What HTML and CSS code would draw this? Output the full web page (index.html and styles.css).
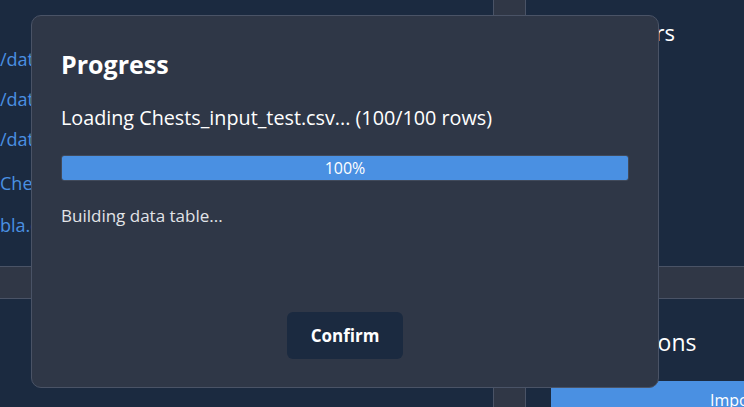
FILE: index.html
```html
<!DOCTYPE html>
<html>
<head>
<meta charset="utf-8">
<link rel="stylesheet" href="styles.css">
</head>
<body>
<div class="app">
  <section class="pane pane-files">
    <ul class="file-list">
      <li>/data/Chests_input_test.csv</li>
      <li>/data/Chests_output.csv</li>
      <li>/data/tabla_test.csv</li>
      <li>Chests_input_test.csv</li>
      <li>bla.csv</li>
    </ul>
  </section>
  <div class="vsplit"></div>
  <section class="pane pane-params">
    <h2 class="pane-title">Parameters</h2>
  </section>
  <div class="hsplit"></div>
  <section class="pane pane-bottom-left"></section>
  <div class="vsplit"></div>
  <section class="pane pane-actions">
    <h2 class="pane-title actions-title">Actions</h2>
    <button class="import-btn">Import</button>
  </section>
</div>

<div class="dialog">
  <h1 class="dialog-title">Progress</h1>
  <p class="dialog-status">Loading Chests_input_test.csv... (100/100 rows)</p>
  <div class="progress"><div class="progress-fill" style="width:100%"></div><span class="progress-label">100%</span></div>
  <p class="dialog-sub">Building data table...</p>
  <div class="dialog-footer"><button class="confirm-btn">Confirm</button></div>
</div>
</body>
</html>
```
FILE: styles.css
```css
* { box-sizing: border-box; }
html, body { margin: 0; padding: 0; }
body {
  width: 744px; height: 407px; overflow: hidden;
  background: #1b2a40;
  font-family: "Open Sans", "Noto Sans", sans-serif;
  color: #ffffff;
  position: relative;
}
.app {
  display: grid;
  grid-template-columns: 493px 33px 1fr;
  grid-template-rows: 266px 33px 1fr;
  height: 407px;
}
.pane { background: #1b2a40; overflow: hidden; min-width: 0; }
.vsplit {
  background: #303746;
  border-left: 1px solid #4a5366;
  border-right: 1px solid #4a5366;
}
.hsplit {
  grid-column: 1 / -1;
  background: #303746;
  border-top: 1px solid #4a5366;
  border-bottom: 1px solid #4a5366;
}
.file-list {
  list-style: none; margin: 0; padding: 47px 0 0 0;
  display: flex; flex-direction: column; gap: 15px;
}
.file-list li {
  color: #4a90e2; font-size: 18px; line-height: 25px; white-space: nowrap;
}
.file-list li:nth-child(4) { margin-top: 4px; }
.file-list li:nth-child(5) { margin-top: 2px; }
.pane-title {
  margin: 0; font-weight: 400; color: #fff; white-space: nowrap;
}
.pane-params .pane-title { padding: 17px 0 0 30px; font-size: 22px; line-height: 30px; }
.pane-actions { padding: 28px 0 0 25px; display: flex; flex-direction: column; }
.actions-title { font-size: 23px; padding-left: 67px; line-height: 30px; }
.import-btn {
  margin-top: 24px; height: 40px; width: 260px;
  background: #4a90e2; border: none; color: #fff;
  font-family: inherit; font-size: 16px; text-align: left; padding: 8px 0 0 159px;
}

.dialog {
  position: absolute; left: 31px; top: 15px;
  width: 628px; height: 373px;
  background: #2f3747;
  border: 1px solid #4a5366;
  border-radius: 10px;
  padding: 31px 29px 28px 29px;
  display: flex; flex-direction: column;
}
.dialog-title {
  margin: 0; font-size: 25px; line-height: 34px; font-weight: 700; color: #fff;
}
.dialog-status {
  margin: 23px 0 0 0; font-size: 19.75px; line-height: 28px; color: #fff;
}
.progress {
  margin-top: 23px; height: 26px; position: relative;
  background: #3a4252; border: 1px solid #414a5b; border-radius: 3px; overflow: hidden;
}
.progress-fill { height: 100%; background: #4a90e2; }
.progress-label {
  position: absolute; inset: 0; display: flex; align-items: center; justify-content: center;
  font-size: 16px; color: #fff;
}
.dialog-sub {
  margin: 23px 0 0 0; font-size: 17px; line-height: 24px; color: #e2e4e8;
}
.dialog-footer { margin-top: auto; display: flex; justify-content: center; }
.confirm-btn {
  width: 116px; height: 47px;
  background: #1b2a40; color: #fff; border: none; border-radius: 6px;
  font-family: inherit; font-size: 17px; font-weight: 700;
}
```
